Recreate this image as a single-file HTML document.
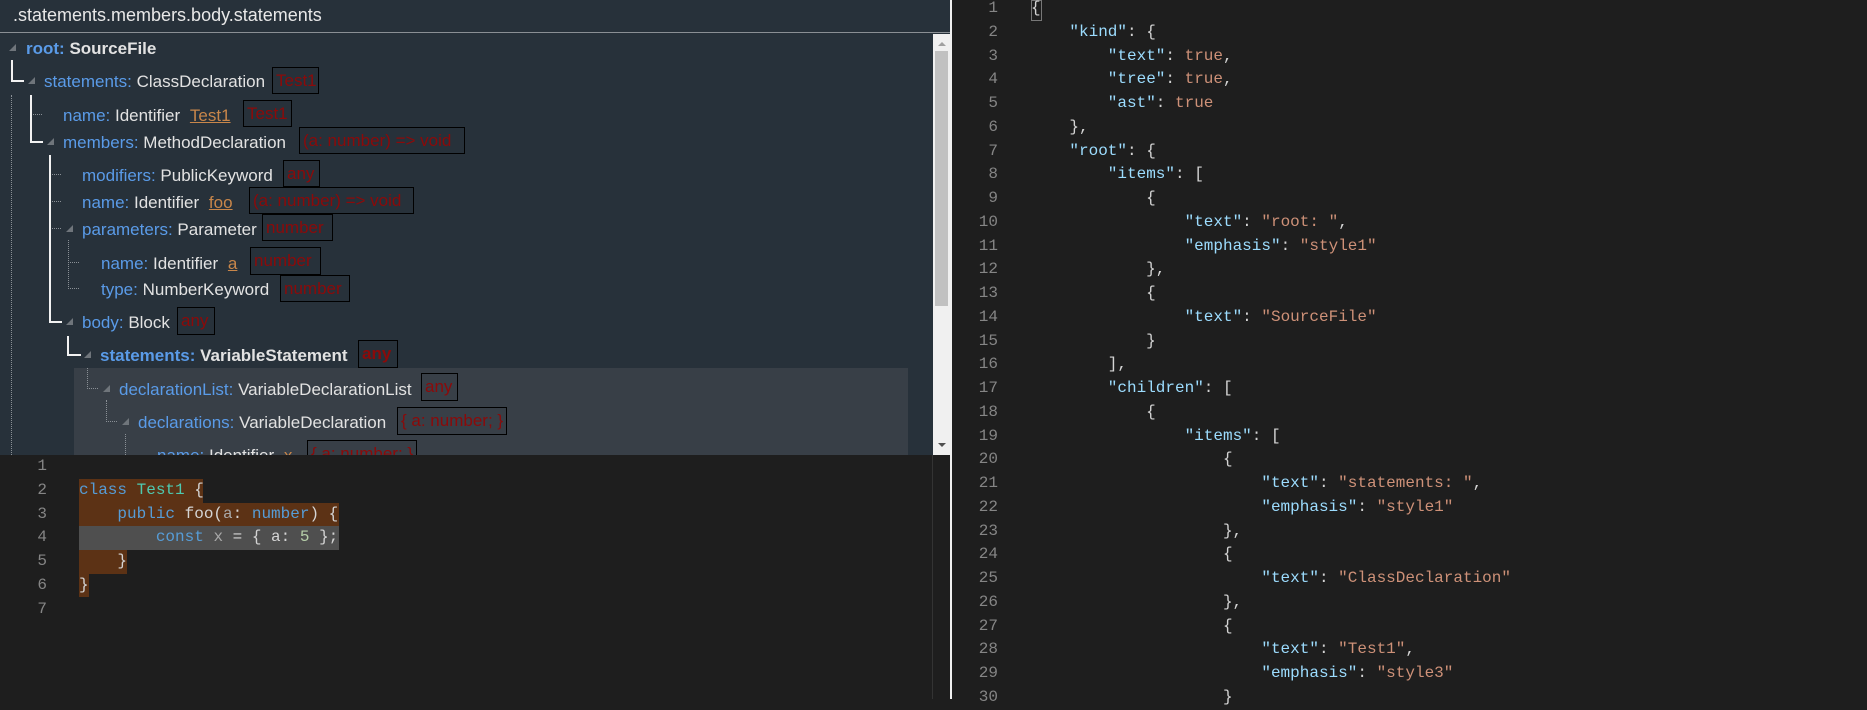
<!DOCTYPE html>
<html><head><meta charset="utf-8"><style>
*{margin:0;padding:0;box-sizing:border-box}
body{width:1867px;height:699px;overflow:hidden;background:#1e1e1e;position:relative;font-family:"Liberation Sans",sans-serif}
#left{position:absolute;left:0;top:0;width:950px;height:455px;background:#27313a;overflow:hidden}
#hdr{position:absolute;left:0;top:0;width:950px;height:33px;border-bottom:1px solid #8a8f94;color:#e8e8e8;font-size:18px;padding:5px 0 0 13px}
.a{position:absolute;white-space:nowrap;font-size:17px;color:#e2e2e2;line-height:20px}
.k{color:#5a9be8}
.o{color:#c8864a;text-decoration:underline}
.b{position:absolute;border:1px solid #000;color:#8b0a0a;font-size:17px;line-height:25px;padding-left:3px;white-space:nowrap;overflow:hidden}
.w{position:absolute;background:#f2f2f2}
.d{position:absolute;border-color:#8a9096;border-style:dotted;border-width:0}
.t{position:absolute;width:0;height:0;border-left:7px solid transparent;border-bottom:7px solid #6f757b}
#sb{position:absolute;left:933px;top:34px;width:17px;height:421px;background:#f0f0f0}
#code,#json{position:absolute;font-family:"Liberation Mono",monospace;font-size:16px;line-height:23.75px;white-space:pre;color:#d4d4d4}
.ln{position:absolute;font-family:"Liberation Mono",monospace;font-size:16px;line-height:23.75px;color:#858585;text-align:right}
.g{display:inline-block;width:38.4px;box-shadow:inset 1px 0 0 #404040}
.ky{color:#9cdcfe}.s{color:#ce9178}.bl{color:#569cd6}.ty{color:#4ec9b0}.n{color:#b5cea8}
</style></head><body>
<div id="left">
<div id="hdr">.statements.members.body.statements</div>
<div style="position:absolute;left:74px;top:368px;width:834px;height:87px;background:#383f47"></div>

<div class="d" style="left:11px;top:95px;height:360px;border-left-width:1px"></div>
<div class="w" style="left:11px;top:60px;width:2px;height:22px"></div>
<div class="w" style="left:11px;top:80px;width:13px;height:2px"></div>
<div class="w" style="left:30px;top:95px;width:2px;height:48px"></div>
<div class="w" style="left:30px;top:141px;width:13px;height:2px"></div>
<div class="d" style="left:33px;top:114px;width:9px;border-top-width:1px"></div>
<div class="w" style="left:49px;top:155px;width:2px;height:168px"></div>
<div class="w" style="left:49px;top:321px;width:13px;height:2px"></div>
<div class="d" style="left:52px;top:174px;width:9px;border-top-width:1px"></div>
<div class="d" style="left:52px;top:201px;width:9px;border-top-width:1px"></div>
<div class="d" style="left:52px;top:228px;width:9px;border-top-width:1px"></div>
<div class="d" style="left:68px;top:240px;height:49px;border-left-width:1px"></div>
<div class="d" style="left:68px;top:262px;width:11px;border-top-width:1px"></div>
<div class="d" style="left:68px;top:288px;width:11px;border-top-width:1px"></div>
<div class="w" style="left:67px;top:336px;width:2px;height:20px"></div>
<div class="w" style="left:67px;top:354px;width:14px;height:2px"></div>
<div class="d" style="left:87px;top:368px;height:21px;border-left-width:1px"></div>
<div class="d" style="left:87px;top:388px;width:11px;border-top-width:1px"></div>
<div class="d" style="left:106px;top:400px;height:22px;border-left-width:1px"></div>
<div class="d" style="left:106px;top:421px;width:11px;border-top-width:1px"></div>
<div class="d" style="left:125px;top:434px;height:21px;border-left-width:1px"></div>

<div class="t" style="left:9px;top:44px"></div>
<div class="t" style="left:28px;top:77px"></div>
<div class="t" style="left:47px;top:138px"></div>
<div class="t" style="left:66px;top:225px"></div>
<div class="t" style="left:66px;top:318px"></div>
<div class="t" style="left:84px;top:351px"></div>
<div class="t" style="left:103px;top:385px"></div>
<div class="t" style="left:122px;top:418px"></div>

<div class="a" style="left:26px;top:39px;font-weight:bold"><span class="k">root:</span> SourceFile</div>
<div class="a" style="left:44px;top:72px"><span class="k">statements:</span> ClassDeclaration</div>
<div class="b" style="left:272px;top:67px;width:47px;height:27px">Test1</div>
<div class="a" style="left:63px;top:106px"><span class="k">name:</span> Identifier <span class="o" style="margin-left:5px">Test1</span></div>
<div class="b" style="left:243px;top:100px;width:49px;height:27px">Test1</div>
<div class="a" style="left:63px;top:133px"><span class="k">members:</span> MethodDeclaration</div>
<div class="b" style="left:299px;top:127px;width:166px;height:27px">(a: number) =&gt; void</div>
<div class="a" style="left:82px;top:166px"><span class="k">modifiers:</span> PublicKeyword</div>
<div class="b" style="left:283px;top:160px;width:37px;height:27px">any</div>
<div class="a" style="left:82px;top:193px"><span class="k">name:</span> Identifier <span class="o" style="margin-left:5px">foo</span></div>
<div class="b" style="left:249px;top:187px;width:165px;height:27px">(a: number) =&gt; void</div>
<div class="a" style="left:82px;top:220px"><span class="k">parameters:</span> Parameter</div>
<div class="b" style="left:262px;top:214px;width:71px;height:27px">number</div>
<div class="a" style="left:101px;top:254px"><span class="k">name:</span> Identifier <span class="o" style="margin-left:5px">a</span></div>
<div class="b" style="left:250px;top:247px;width:71px;height:28px">number</div>
<div class="a" style="left:101px;top:280px"><span class="k">type:</span> NumberKeyword</div>
<div class="b" style="left:280px;top:275px;width:70px;height:27px">number</div>
<div class="a" style="left:82px;top:313px"><span class="k">body:</span> Block</div>
<div class="b" style="left:177px;top:307px;width:38px;height:28px">any</div>
<div class="a" style="left:100px;top:346px;font-weight:bold"><span class="k">statements:</span> VariableStatement</div>
<div class="b" style="left:358px;top:340px;width:40px;height:28px;font-weight:bold">any</div>
<div class="a" style="left:119px;top:380px"><span class="k">declarationList:</span> VariableDeclarationList</div>
<div class="b" style="left:421px;top:373px;width:37px;height:28px">any</div>
<div class="a" style="left:138px;top:413px"><span class="k">declarations:</span> VariableDeclaration</div>
<div class="b" style="left:397px;top:407px;width:110px;height:28px">{ a: number; }</div>
<div class="a" style="left:157px;top:446px"><span class="k">name:</span> Identifier <span class="o" style="margin-left:5px">x</span></div>
<div class="b" style="left:307px;top:440px;width:110px;height:28px">{ a: number; }</div>

<div id="sb">
<div style="position:absolute;left:5px;top:8px;border-left:4px solid transparent;border-right:4px solid transparent;border-bottom:4px solid #a0a0a0"></div>
<div style="position:absolute;left:2px;top:17px;width:13px;height:255px;background:#c1c1c1"></div>
<div style="position:absolute;left:5px;top:409px;border-left:4px solid transparent;border-right:4px solid transparent;border-top:4px solid #505050"></div>
</div>
</div>
<div style="position:absolute;left:950px;top:0;width:2px;height:699px;background:#f0f0f0"></div>
<div style="position:absolute;left:932px;top:455px;width:1px;height:244px;background:#333"></div>

<div class="ln" style="left:0;top:455px;width:47px">1<br>2<br>3<br>4<br>5<br>6<br>7</div>
<div style="position:absolute;left:79px;top:479px;width:124px;height:24px;background:#5c3215"></div>
<div style="position:absolute;left:79px;top:503px;width:260px;height:24px;background:#5c3215"></div>
<div style="position:absolute;left:79px;top:526px;width:260px;height:24px;background:#4f4f4f"></div>
<div style="position:absolute;left:79px;top:550px;width:48px;height:24px;background:#5c3215"></div>
<div style="position:absolute;left:79px;top:574px;width:10px;height:23px;background:#5c3215"></div>
<div id="code" style="left:79px;top:455px">
<span class="bl">class</span> <span class="ty">Test1</span> {
    <span class="bl">public</span> foo(<span style="color:#a8a8a8">a</span>: <span class="bl">number</span>) {
        <span class="bl">const</span> <span style="color:#a8a8a8">x</span> = { a: <span class="n">5</span> };
    }
}
</div>

<div class="ln" style="left:960px;top:-3px;width:38px">1<br>2<br>3<br>4<br>5<br>6<br>7<br>8<br>9<br>10<br>11<br>12<br>13<br>14<br>15<br>16<br>17<br>18<br>19<br>20<br>21<br>22<br>23<br>24<br>25<br>26<br>27<br>28<br>29<br>30</div>
<div style="position:absolute;left:1031px;top:0;width:11px;height:21px;border:1px solid #777"></div>
<div id="json" style="left:1031px;top:-3px">{
<span class="g"></span><span class="ky">"kind"</span>: {
<span class="g"></span><span class="g"></span><span class="ky">"text"</span>: <span class="s">true</span>,
<span class="g"></span><span class="g"></span><span class="ky">"tree"</span>: <span class="s">true</span>,
<span class="g"></span><span class="g"></span><span class="ky">"ast"</span>: <span class="s">true</span>
<span class="g"></span>},
<span class="g"></span><span class="ky">"root"</span>: {
<span class="g"></span><span class="g"></span><span class="ky">"items"</span>: [
<span class="g"></span><span class="g"></span><span class="g"></span>{
<span class="g"></span><span class="g"></span><span class="g"></span><span class="g"></span><span class="ky">"text"</span>: <span class="s">"root: "</span>,
<span class="g"></span><span class="g"></span><span class="g"></span><span class="g"></span><span class="ky">"emphasis"</span>: <span class="s">"style1"</span>
<span class="g"></span><span class="g"></span><span class="g"></span>},
<span class="g"></span><span class="g"></span><span class="g"></span>{
<span class="g"></span><span class="g"></span><span class="g"></span><span class="g"></span><span class="ky">"text"</span>: <span class="s">"SourceFile"</span>
<span class="g"></span><span class="g"></span><span class="g"></span>}
<span class="g"></span><span class="g"></span>],
<span class="g"></span><span class="g"></span><span class="ky">"children"</span>: [
<span class="g"></span><span class="g"></span><span class="g"></span>{
<span class="g"></span><span class="g"></span><span class="g"></span><span class="g"></span><span class="ky">"items"</span>: [
<span class="g"></span><span class="g"></span><span class="g"></span><span class="g"></span><span class="g"></span>{
<span class="g"></span><span class="g"></span><span class="g"></span><span class="g"></span><span class="g"></span><span class="g"></span><span class="ky">"text"</span>: <span class="s">"statements: "</span>,
<span class="g"></span><span class="g"></span><span class="g"></span><span class="g"></span><span class="g"></span><span class="g"></span><span class="ky">"emphasis"</span>: <span class="s">"style1"</span>
<span class="g"></span><span class="g"></span><span class="g"></span><span class="g"></span><span class="g"></span>},
<span class="g"></span><span class="g"></span><span class="g"></span><span class="g"></span><span class="g"></span>{
<span class="g"></span><span class="g"></span><span class="g"></span><span class="g"></span><span class="g"></span><span class="g"></span><span class="ky">"text"</span>: <span class="s">"ClassDeclaration"</span>
<span class="g"></span><span class="g"></span><span class="g"></span><span class="g"></span><span class="g"></span>},
<span class="g"></span><span class="g"></span><span class="g"></span><span class="g"></span><span class="g"></span>{
<span class="g"></span><span class="g"></span><span class="g"></span><span class="g"></span><span class="g"></span><span class="g"></span><span class="ky">"text"</span>: <span class="s">"Test1"</span>,
<span class="g"></span><span class="g"></span><span class="g"></span><span class="g"></span><span class="g"></span><span class="g"></span><span class="ky">"emphasis"</span>: <span class="s">"style3"</span>
<span class="g"></span><span class="g"></span><span class="g"></span><span class="g"></span><span class="g"></span>}</div>
</body></html>
